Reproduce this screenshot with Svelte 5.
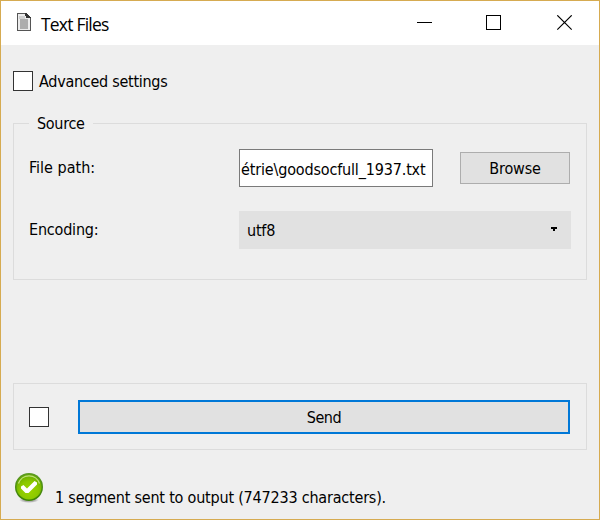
<script>
  let advanced = $state(false);
  let auto = $state(false);
</script>

<div class="window">
  <header>
    <svg class="doc" width="14" height="18" viewBox="0 0 14 18" shape-rendering="crispEdges">
      <path d="M0 0H9L14 5V18H0Z" fill="#555" />
      <path d="M1 1H9V5H13V17H1Z" fill="#ececec" />
      <path d="M3 6H11V16H3Z" fill="#adadad" />
      <path d="M2 3H8V6H2Z" fill="#d0d0d0" />
      <path d="M8 0H9L14 5H9V3H8Z" fill="#333" />
    </svg>
    <span class="title">Text Files</span>
    <svg class="controls" width="156" height="16" viewBox="0 0 156 16" fill="none" stroke="#000">
      <path d="M0 7.500H15M69.500 .5H83.500V14.500H69.500Z" shape-rendering="crispEdges" />
      <path d="M140.300 .3L154.700 14.700M154.700 .3L140.300 14.700" stroke-width="1.150" />
    </svg>
  </header>

  <main>
    <label class="advanced"><input type="checkbox" bind:checked={advanced} /><span class="t-adv">Advanced settings</span></label>

    <section class="group source">
      <div class="legend"><span class="t-source">Source</span></div>
      <div class="row path">
        <span class="name t-file">File path:</span>
        <div class="field"><span class="t-path">étrie\goodsocfull_1937.txt</span></div>
        <button class="browse"><span class="t-browse">Browse</span></button>
      </div>
      <div class="row encoding">
        <span class="name t-enc">Encoding:</span>
        <div class="combo">
          <span class="t-utf">utf8</span>
          <svg width="6" height="4" viewBox="0 0 6 4" shape-rendering="crispEdges"><path d="M0 0H6V2H4V4H2V2H0Z" /></svg>
        </div>
      </div>
    </section>

    <section class="group sending">
      <input type="checkbox" bind:checked={auto} aria-label="Send automatically" />
      <button class="send"><span class="t-send">Send</span></button>
    </section>

    <footer>
      <svg width="30" height="32" viewBox="0 0 30 32">
        <defs>
          <linearGradient id="rim" x2="0" y2="1"><stop stop-color="#5c9a22" /><stop offset="1" stop-color="#3c8204" /></linearGradient>
          <radialGradient id="face" cx=".5" cy=".65" r=".62"><stop stop-color="#9bd400" /><stop offset=".6" stop-color="#8bc800" /><stop offset="1" stop-color="#6aac00" /></radialGradient>
          <radialGradient id="shade"><stop offset=".6" stop-color="#888" stop-opacity=".6" /><stop offset="1" stop-color="#999" stop-opacity="0" /></radialGradient>
        </defs>
        <ellipse cx="15" cy="27" rx="10" ry="3" fill="url(#shade)" />
        <circle cx="15" cy="14" r="14" fill="url(#rim)" />
        <circle cx="15" cy="14" r="12.500" fill="url(#face)" />
        <path d="M4.500 10.500A11 11 0 0 1 25.500 10.500" fill="none" stroke="#d9efaa" stroke-width="1.300" opacity=".75" />
        <path d="M7 13.500L9.500 12L13 15.500L20.500 8L23 9.500V11.500L14.500 20H11.500L7 15.500Z" fill="#fff" />
      </svg>
      <span class="t-status">1 segment sent to output (747233 characters).</span>
    </footer>
  </main>
</div>

<style>
  :global(body) { margin: 0; }
  .window {
    box-sizing: border-box; width: 600px; height: 520px; border: 1px solid #d6ab51;
    background: #efefef; color: #000; overflow: hidden;
    font: 16px/20px "DejaVu Sans Condensed", "DejaVu Sans", sans-serif; font-stretch: condensed;
  }
  span { white-space: nowrap; }
  header { display: flex; height: 44px; background: #fff; }
  .doc { margin: 12px 0 0 16px; flex: none; }
  .title { font: 17.500px/24px "Open Sans", sans-serif; margin: 11px 0 0 10px; letter-spacing: -.8px; }
  .controls { margin: 14px 26px 0 auto; }
  main { padding: 26px 12px 0; }
  input {
    appearance: none; box-sizing: border-box; width: 20px; height: 20px; margin: 0;
    border: 1px solid #333; background: #fff; flex: none;
  }
  .advanced { display: flex; gap: 6px; height: 20px; }
  .advanced span { padding-top: 1px; }
  .group { box-sizing: border-box; border: 1px solid #dcdcdc; }
  .source { height: 157px; margin-top: 32px; padding: 0 15px; }
  .legend { width: 64px; height: 21px; margin-top: -11px; background: #efefef; box-sizing: border-box; padding: 1px 0 0 8px; }
  .row { display: flex; }
  .path { margin-top: 15px; height: 38px; }
  .encoding { margin-top: 24px; height: 38px; }
  .name { width: 210px; padding-top: 9px; flex: none; }
  .field {
    box-sizing: border-box; width: 194px; height: 38px; border: 1px solid #7a7a7a; background: #fff;
    display: flex; align-items: center; padding: 4px 0 0 1px; overflow: hidden;
  }
  button { box-sizing: border-box; font: inherit; color: inherit; background: #e1e1e1; text-align: center; padding: 2px 0 0; }
  .browse { width: 110px; height: 32px; margin: 3px 0 0 27px; border: 1px solid #adadad; }
  .combo {
    box-sizing: border-box; width: 332px; flex: none; background: #e1e1e1; display: flex;
    justify-content: space-between; align-items: center; padding: 0 14px 0 8px;
  }
  .combo span { padding-top: 2px; }
  .combo svg { margin-bottom: 2px; }
  .sending { display: flex; align-items: center; height: 67px; margin-top: 103px; padding: 0 16px 0 15px; }
  .send { flex: 1; height: 34px; margin-left: 29px; border: 2px solid #0078d7; }
  footer { display: flex; margin-top: 23px; padding-left: 1px; }
  footer svg { flex: none; }
  footer span { margin: 15px 0 0 11px; }
  .t-adv { letter-spacing: -.27px; }
  .t-source { letter-spacing: -.3px; }
  .t-file { letter-spacing: 0; }
  .t-path { letter-spacing: -.16px; }
  .t-enc { letter-spacing: -.2px; }
  .t-browse { letter-spacing: -.15px; }
  .t-utf { letter-spacing: -.2px; }
  .t-send { letter-spacing: -.4px; }
  .t-status { letter-spacing: -.2px; }
</style>
